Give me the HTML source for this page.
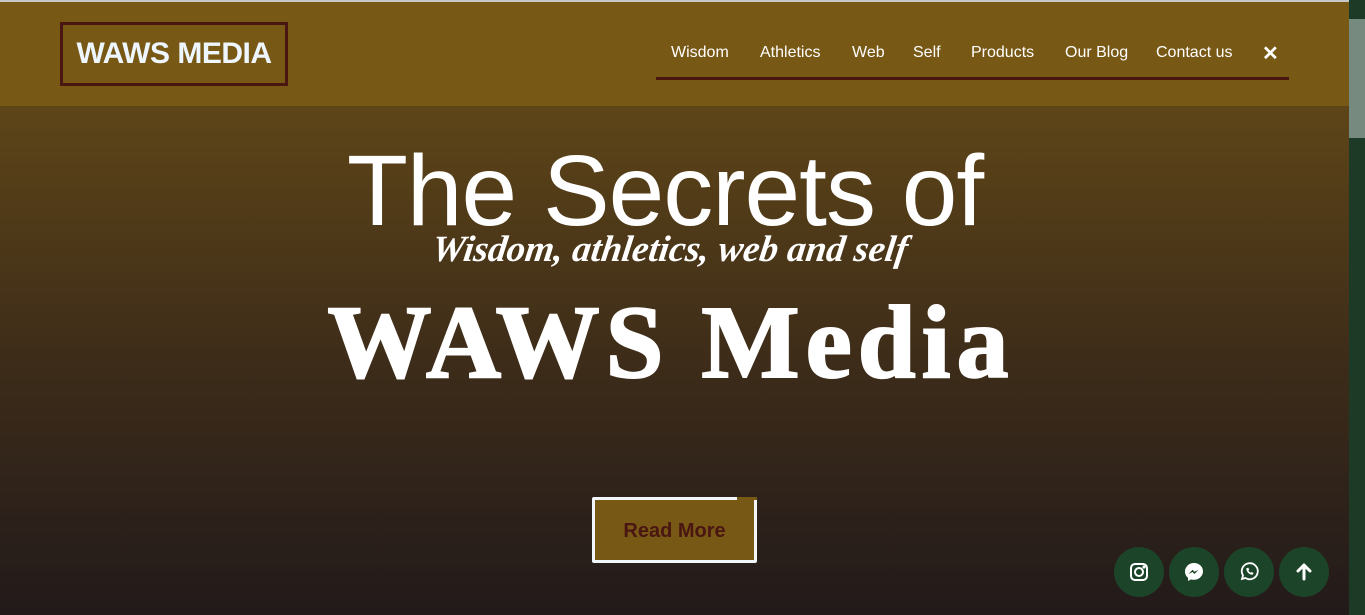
<!DOCTYPE html>
<html><head><meta charset="utf-8"><style>
*{margin:0;padding:0;box-sizing:border-box}
body{width:1365px;height:615px;overflow:hidden;position:relative;font-family:"Liberation Sans",sans-serif;background:#221a1a}
.top{position:absolute;left:0;top:0;width:1349px;height:2px;background:#c8c8c8}
header{position:absolute;left:0;top:2px;width:1349px;height:104px;background:#785815}
.logo{position:absolute;left:60px;top:20px;width:228px;height:64px;border:3px solid #4a1612;color:#eef6ff;font-weight:bold;font-size:30px;line-height:58px;text-align:center;letter-spacing:-0.5px}
nav{position:absolute;left:656px;top:40px;width:633px;height:38px;border-bottom:3px solid #4a1612;color:#fff;font-size:16px}
nav span{position:absolute;top:2px}
.hero{position:absolute;left:0;top:106px;width:1349px;height:509px;background:linear-gradient(#5e4518,#3d2c19 50%,#221a1a)}
.t1{position:absolute;left:0;width:1330px;top:131px;text-align:center;color:#fff;font-size:100px;line-height:120px;font-family:"Liberation Sans",sans-serif;letter-spacing:-1px}
.t2{position:absolute;left:0;width:1340px;top:228px;text-align:center;color:#fff;font-size:37px;line-height:44px;font-style:italic;font-weight:bold;font-family:"Liberation Serif",serif;transform:skewX(-8deg)}
.t3{position:absolute;left:0;width:1342px;top:288px;text-align:center;color:#fff;font-size:104px;line-height:110px;font-weight:bold;font-family:"Liberation Serif",serif;letter-spacing:6px;-webkit-text-stroke:2px #fff}
.btn{position:absolute;left:592px;top:497px;width:165px;height:66px;background:#785815;border:3px solid #f2f6fb;border-radius:2px;color:#4a1612;font-weight:bold;font-size:20px;line-height:62px;text-align:center}
.btn:after{content:"";position:absolute;right:-3px;top:-3px;width:20px;height:3px;background:#785815}
.c{position:absolute;top:547px;width:50px;height:50px;border-radius:50%;background:#1c4428;display:flex;align-items:center;justify-content:center}
.sb{position:absolute;left:1349px;top:0;width:16px;height:615px;background:#1c3a26}
.th{position:absolute;left:1349px;top:19px;width:16px;height:119px;background:#778a80}
</style></head><body>
<div class="top"></div>
<header><div class="logo">WAWS MEDIA</div>
<nav><span style="left:15px">Wisdom</span><span style="left:104px">Athletics</span><span style="left:196px">Web</span><span style="left:257px">Self</span><span style="left:315px">Products</span><span style="left:409px">Our Blog</span><span style="left:500px">Contact us</span><span style="left:606px;font-weight:bold;font-size:20px;top:-1px">✕</span></nav></header>
<div class="hero"></div>
<div class="t1">The Secrets of</div>
<div class="t2">Wisdom, athletics, web and self</div>
<div class="t3">WAWS Media</div>
<div class="btn">Read More</div>
<div class="c" style="left:1114px"><svg width="20" height="20" viewBox="0 0 20 20" fill="none" stroke="#fff" stroke-width="2"><rect x="2" y="2" width="16" height="16" rx="4"/><circle cx="10" cy="10" r="4"/><circle cx="15" cy="5" r=".6" fill="#fff"/></svg></div>
<div class="c" style="left:1169px"><svg width="22" height="22" viewBox="0 0 22 22"><path d="M11 2C6 2 2 5.7 2 10.5c0 2.6 1.2 4.8 3 6.3V20l3-1.6c.9.3 1.9.4 3 .4 5 0 9-3.7 9-8.5S16 2 11 2z" fill="#fff"/><path d="M5.5 13l4-4.2 2 2 4-2-4 4.2-2-2z" fill="#1c4428"/></svg></div>
<div class="c" style="left:1224px"><svg width="20" height="20" viewBox="0 0 20 20" fill="none" stroke="#fff" stroke-width="1.8"><path d="M3 17l1-3.5A8 8 0 1 1 6.5 16z"/><path d="M7.5 6.5c0 3 2.5 6 6 6l.8-1.5-1.8-.8-.8.8c-1-.5-2-1.5-2.5-2.5l.8-.8-.8-1.8z" fill="#fff" stroke-width=".5"/></svg></div>
<div class="c" style="left:1279px"><svg width="20" height="20" viewBox="0 0 20 20" fill="none" stroke="#fff" stroke-width="3" stroke-linecap="round" stroke-linejoin="round"><path d="M10 17V3M4 9l6-6 6 6"/></svg></div>
<div class="sb"></div><div class="th"></div>
</body></html>
